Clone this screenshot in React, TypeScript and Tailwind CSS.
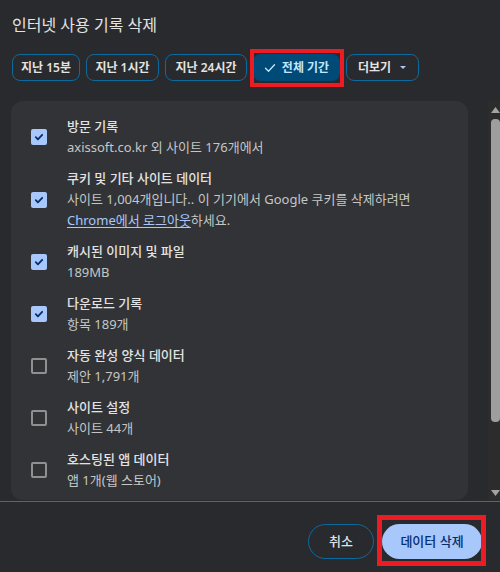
import React from 'react';

type Item = { title: string; sub: React.ReactNode; checked: boolean };

const items: Item[] = [
  { title: '방문 기록', sub: 'axissoft.co.kr 외 사이트 176개에서', checked: true },
  {
    title: '쿠키 및 기타 사이트 데이터',
    sub: (
      <>
        사이트 1,004개입니다.. 이 기기에서 Google 쿠키를 삭제하려면
        <br />
        <span className="text-[#a8c7fa] underline underline-offset-2">Chrome에서 로그아웃</span>하세요.
      </>
    ),
    checked: true,
  },
  { title: '캐시된 이미지 및 파일', sub: '189MB', checked: true },
  { title: '다운로드 기록', sub: '항목 189개', checked: true },
  { title: '자동 완성 양식 데이터', sub: '제안 1,791개', checked: false },
  { title: '사이트 설정', sub: '사이트 44개', checked: false },
  { title: '호스팅된 앱 데이터', sub: '앱 1개(웹 스토어)', checked: false },
];

const chips = [
  { label: '지난 15분', w: 'w-[68px]' },
  { label: '지난 1시간', w: 'w-[73px]' },
  { label: '지난 24시간', w: 'w-[82px]' },
];

const Checkbox = ({ checked }: { checked: boolean }) =>
  checked ? (
    <div className="w-[16px] h-[16px] shrink-0 rounded-[2px] bg-[#a8c7fa] flex items-center justify-center">
      <svg width="16" height="16" viewBox="0 0 16 16" fill="none">
        <path d="M4.8 8.2 L6.9 10.3 L11.2 5.8" stroke="#062e6f" strokeWidth="1.8" strokeLinecap="round" strokeLinejoin="round" />
      </svg>
    </div>
  ) : (
    <div className="w-[16px] h-[16px] shrink-0 rounded-[2px] border-2 border-[#8e918f]" />
  );

export default function App() {
  return (
    <div className="w-[500px] h-[572px] bg-[#292a2d] flex flex-col overflow-hidden font-['Noto_Sans','Noto_Sans_CJK_KR',sans-serif] text-[#e3e3e3]">
      {/* Header */}
      <h1 className="pl-[12px] pt-[13px] text-[16px] leading-[24px] font-normal text-[#e3e3e3]">인터넷 사용 기록 삭제</h1>

      {/* Time range chips */}
      <div className="flex gap-[6px] pl-[12px] mt-[17px]">
        {chips.map((c) => (
          <div
            key={c.label}
            className={`${c.w} h-[27px] rounded-[8px] border border-[#0b6aa0] flex items-center justify-center text-[12px] font-semibold text-[#e3e3e3]`}
          >
            {c.label}
          </div>
        ))}
        <div className="relative w-[87px] h-[27px]">
          <div className="w-full h-full rounded-[8px] bg-[#004a77] flex items-center justify-center gap-[6px] text-[12px] font-semibold text-[#c2e7ff]">
            <svg width="12" height="12" viewBox="0 0 12 12" fill="none">
              <path d="M1.5 6.3 L4.5 9.3 L10.5 2.8" stroke="#c2e7ff" strokeWidth="1.3" strokeLinecap="round" strokeLinejoin="round" />
            </svg>
            전체 기간
          </div>
          <div className="absolute left-[-3px] right-[-4px] top-[-5px] bottom-[-6px] border-4 border-[#ed1c24]" />
        </div>
        <div className="w-[73px] h-[27px] rounded-[8px] border border-[#0b6aa0] flex items-center justify-center gap-[8px] text-[12px] font-semibold text-[#e3e3e3]">
          더보기
          <svg width="8" height="5" viewBox="0 0 8 5">
            <path d="M1 1 L7 1 L4 4 Z" fill="#a8c7fa" />
          </svg>
        </div>
      </div>

      {/* Scrollable body */}
      <div className="flex mt-[20px] h-[400px]">
        <div className="flex-1 pl-[11px] pr-[20px]">
          <div className="h-[399px] rounded-[12px] bg-[#323337] pt-[10px] overflow-hidden">
            {items.map((it) => (
              <div key={it.title} className="flex items-center gap-[20px] pl-[20px] py-[5px]">
                <Checkbox checked={it.checked} />
                <div className="text-[13px] leading-[21px]">
                  <div className="font-medium text-[#e3e3e3]">{it.title}</div>
                  <div className="text-[#c4c7c5]">{it.sub}</div>
                </div>
              </div>
            ))}
          </div>
        </div>
        {/* Scrollbar */}
        <div className="w-[12px] bg-[#2c2c2c] flex flex-col items-end">
          <svg width="9" height="6" viewBox="0 0 9 6" className="mt-[6px]">
            <path d="M0 6 L4.5 0 L9 6 Z" fill="#a3a3a3" />
          </svg>
          <div className="w-[9px] h-[303px] mt-[6px] rounded-t-[4px] rounded-b-[4px] bg-[#9e9e9e]" />
          <svg width="9" height="6" viewBox="0 0 9 6" className="mt-[68px]">
            <path d="M0 0 L9 0 L4.5 6 Z" fill="#a3a3a3" />
          </svg>
        </div>
      </div>

      <div className="h-px bg-[#5f6368]" />

      {/* Footer */}
      <div className="flex justify-end gap-[8px] pt-[22px] pr-[18px]">
        <div className="w-[66px] h-[35px] rounded-full border border-[#0b6aa0] flex items-center justify-center text-[13px] font-medium text-[#dde3ec]">
          취소
        </div>
        <div className="relative w-[100px] h-[35px]">
          <div className="w-full h-full rounded-full bg-[#a8c7fa] flex items-center justify-center text-[13px] font-medium text-[#062e6f]">
            데이터 삭제
          </div>
          <div className="absolute left-[-5px] right-[-4px] top-[-9px] bottom-[-7px] border-[5px] border-[#ed1c24]" />
        </div>
      </div>
    </div>
  );
}
